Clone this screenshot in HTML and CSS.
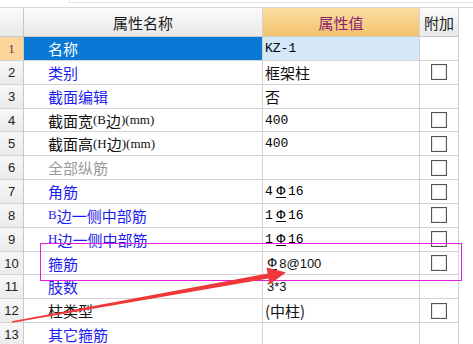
FILE: index.html
```html
<!DOCTYPE html>
<html>
<head>
<meta charset="utf-8">
<link rel="stylesheet" href="styles.css">
</head>
<body>
<div class="page">
  <div class="topbar"><div class="topbox"></div></div>
  <div class="grid">
    <div class="c num hd"></div>
    <div class="c hd name-hd">属性名称</div>
    <div class="c hd val-hd">属性值</div>
    <div class="c hd add-hd">附加</div>

    <div class="c num sel-num">1</div>
    <div class="c name sel-name">名称</div>
    <div class="c val sel-val mono">KZ-1</div>
    <div class="c add"></div>

    <div class="c num">2</div>
    <div class="c name blue">类别</div>
    <div class="c val cjk">框架柱</div>
    <div class="c add"><span class="box"></span></div>

    <div class="c num">3</div>
    <div class="c name blue">截面编辑</div>
    <div class="c val cjk">否</div>
    <div class="c add"></div>

    <div class="c num">4</div>
    <div class="c name black">截面宽<span class="sm">(B</span>边<span class="sm">)(mm)</span></div>
    <div class="c val mono">400</div>
    <div class="c add"><span class="box"></span></div>

    <div class="c num">5</div>
    <div class="c name black">截面高<span class="sm">(H</span>边<span class="sm">)(mm)</span></div>
    <div class="c val mono">400</div>
    <div class="c add"><span class="box"></span></div>

    <div class="c num">6</div>
    <div class="c name gray">全部纵筋</div>
    <div class="c val"></div>
    <div class="c add"><span class="box"></span></div>

    <div class="c num">7</div>
    <div class="c name blue">角筋</div>
    <div class="c val mono">4<span class="rb">Φ</span>16</div>
    <div class="c add"><span class="box"></span></div>

    <div class="c num">8</div>
    <div class="c name blue"><span class="sm">B</span>边一侧中部筋</div>
    <div class="c val mono">1<span class="rb">Φ</span>16</div>
    <div class="c add"><span class="box"></span></div>

    <div class="c num">9</div>
    <div class="c name blue"><span class="sm">H</span>边一侧中部筋</div>
    <div class="c val mono">1<span class="rb">Φ</span>16</div>
    <div class="c add"><span class="box"></span></div>

    <div class="c num">10</div>
    <div class="c name blue">箍筋</div>
    <div class="c val sans"><span class="rb2">Φ</span>8@100</div>
    <div class="c add"><span class="box"></span></div>

    <div class="c num">11</div>
    <div class="c name blue">肢数</div>
    <div class="c val sans">3*3</div>
    <div class="c add"></div>

    <div class="c num">12</div>
    <div class="c name black">柱类型</div>
    <div class="c val cjk">(中柱)</div>
    <div class="c add"><span class="box"></span></div>

    <div class="c num">13</div>
    <div class="c name blue">其它箍筋</div>
    <div class="c val"></div>
    <div class="c add"></div>
  </div>
  <svg class="overlay" width="473" height="344" viewBox="0 0 473 344">
    <rect x="40.5" y="243.5" width="421" height="37" fill="none" stroke="#e020e0" stroke-width="1"/>
    <polygon points="11.9,321.2 267.6,273.5 266.6,267.6 286,272.6 269.4,284.4 268.4,278.5 12.1,322.8" fill="#f0383a"/>
  </svg>
</div>
</body>
</html>
```
FILE: styles.css
```css
html, body {
  margin: 0;
  padding: 0;
  background: #ffffff;
}
.page {
  position: relative;
  width: 473px;
  height: 344px;
  overflow: hidden;
  font-family: "Noto Sans CJK SC", sans-serif;
}
.topbar {
  box-sizing: border-box;
  height: 8px;
  border-bottom: 1px solid #d8d8d8;
}
.topbox {
  margin-left: 69px;
  height: 2px;
  border-bottom: 1px solid #e4e4e4;
  border-left: 1px solid #e4e4e4;
  width: 420px;
}
.grid {
  display: grid;
  grid-template-columns: 24px 239px 157px 39px;
  grid-template-rows: 29px 24px repeat(12, 23.83px);
}
.c {
  box-sizing: border-box;
  border-right: 1px solid #d3d3d3;
  border-bottom: 1px solid #d3d3d3;
  display: flex;
  align-items: center;
  white-space: nowrap;
  overflow: hidden;
}
.hd {
  background: linear-gradient(#fbfbfb, #e9e9e9);
  justify-content: center;
  font-size: 15px;
  color: #222;
  border-bottom-color: #c8c8c8;
}
.name-hd { color: #1a1a1a; }
.val-hd {
  background: linear-gradient(#fbdda4, #f3c26c);
  color: #8a1f72;
}
.add-hd { color: #222; }
.num {
  background: linear-gradient(#f7f7f7, #ebebeb);
  justify-content: center;
  font-family: "Liberation Sans", sans-serif;
  font-size: 13px;
  color: #222;
  border-right-color: #c8c8c8;
}
.num.hd { background: linear-gradient(#fbfbfb, #e9e9e9); }
.sel-num {
  background: #fcd69a;
  color: #7a1a5a;
  font-family: "Liberation Serif", serif;
}
.name {
  padding-left: 24px;
  font-size: 15px;
}
.sel-name {
  background: #0a79d6;
  color: #ffffff;
}
.sel-val { background: #d6e8f8; }
.blue { color: #1b1bf0; }
.black { color: #111; }
.gray { color: #9a9a9a; }
.sm {
  font-family: "Liberation Serif", serif;
  font-size: 13px;
}
.val {
  padding-left: 2px;
  color: #111;
}
.mono {
  font-family: "Liberation Mono", monospace;
  font-size: 13px;
  color: #000;
}
.sans {
  font-family: "Liberation Sans", sans-serif;
  font-size: 13px;
  padding-left: 4px;
}
.cjk {
  font-size: 15px;
}
.rb {
  font-family: "DejaVu Sans", sans-serif;
  font-size: 13px;
  border-bottom: 1px solid #111;
  line-height: 12px;
  margin: 0 2px 0 3px;
}
.rb2 {
  font-family: "DejaVu Sans", sans-serif;
  font-size: 13px;
  border-bottom: 1px solid #111;
  line-height: 12px;
  margin-right: 2px;
}
.add {
  justify-content: center;
}
.box {
  display: block;
  width: 16px;
  height: 16px;
  box-sizing: border-box;
  border: 1px solid #555;
  background: #fff;
  box-shadow: inset 0 0 0 1px #e8e8e8;
}
.overlay {
  position: absolute;
  left: 0;
  top: 0;
  pointer-events: none;
}
```
